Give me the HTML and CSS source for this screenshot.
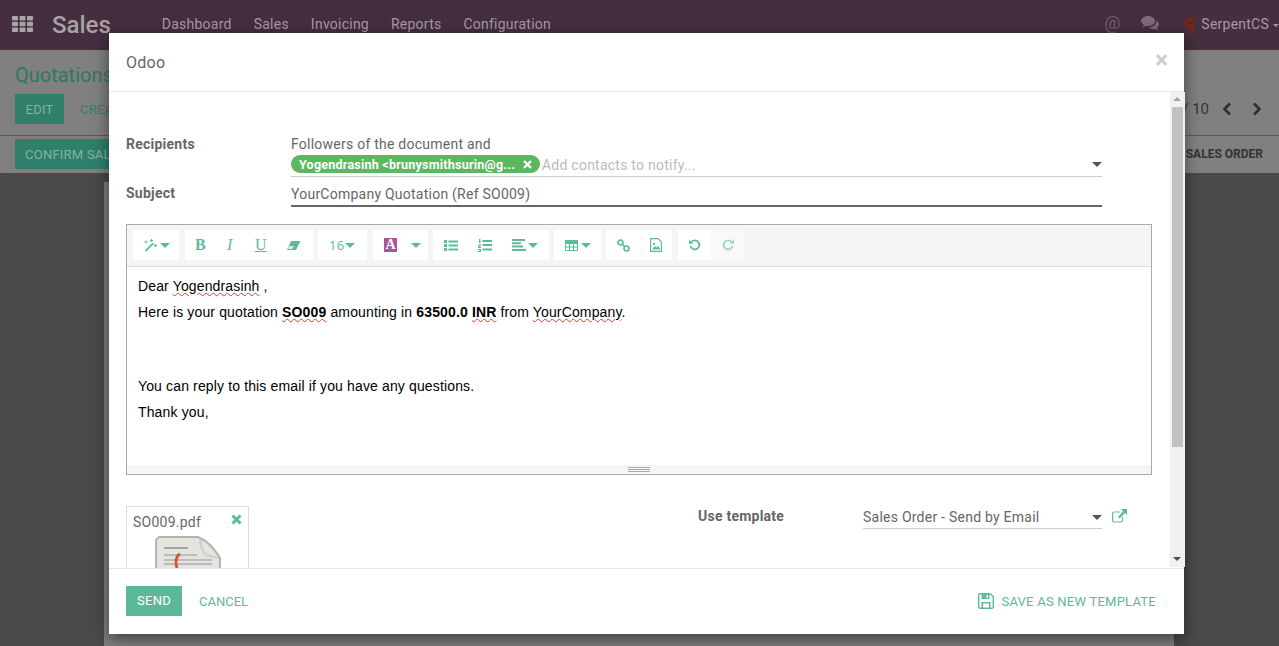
FILE: index.html
```html
<!DOCTYPE html>
<html lang="en">
<head>
<meta charset="utf-8">
<title>Odoo</title>
<link rel="stylesheet" href="styles.css">
</head>
<body>
<div class="app">
  <header class="nav">
    <svg class="apps" width="21" height="16" viewBox="0 0 21 16"><g fill="#a9a3a8"><rect x="0" y="0" width="6" height="4.4" rx=".8"/><rect x="7.5" y="0" width="6" height="4.4" rx=".8"/><rect x="15" y="0" width="6" height="4.4" rx=".8"/><rect x="0" y="5.8" width="6" height="4.4" rx=".8"/><rect x="7.5" y="5.8" width="6" height="4.4" rx=".8"/><rect x="15" y="5.8" width="6" height="4.4" rx=".8"/><rect x="0" y="11.6" width="6" height="4.4" rx=".8"/><rect x="7.5" y="11.6" width="6" height="4.4" rx=".8"/><rect x="15" y="11.6" width="6" height="4.4" rx=".8"/></g></svg>
    <span class="brand">Sales</span>
    <nav class="menu"><span>Dashboard</span><span>Sales</span><span>Invoicing</span><span>Reports</span><span>Configuration</span></nav>
    <div class="nav-right">
      <span class="at">@</span>
      <svg class="chat" width="18" height="15" viewBox="0 0 18 15"><path fill="#7d6b78" d="M7 0c3.900 0 7 2.200 7 5s-3.100 5-7 5c-.7 0-1.300-.1-1.900-.2C4 10.700 2.800 11 1.500 11c.7-.8 1.200-1.600 1.300-2.400C1.100 7.700 0 6.400 0 5c0-2.800 3.100-5 7-5z"/><path fill="#7d6b78" d="M15 4.500c1.800.8 3 2.200 3 3.800 0 1.300-.8 2.500-2 3.300.1.800.6 1.600 1.300 2.400-1.300 0-2.500-.4-3.500-1.200-.6.100-1.200.2-1.800.2-1.800 0-3.400-.5-4.500-1.400 4.300 0 7.800-2.500 7.800-6 0-.3 0-.6-.3-1.100z"/></svg>
      <svg class="logo" width="13" height="18" viewBox="0 0 13 18"><path fill="none" stroke="#7c2416" stroke-width="3.400" d="M11 1.500 3.500 5.200C1.800 6.200 2 7.800 3.500 8.500L8.500 10.500C10.200 11.200 10.200 12.500 9.200 13.700L6.500 17.500"/></svg>
      <span class="user">SerpentCS</span>
      <i class="user-caret"></i>
    </div>
  </header>
  <section class="panel">
    <h1 class="crumb">Quotations</h1>
    <div class="panel-row">
      <button class="pbtn">EDIT</button>
      <span class="plink">CREATE</span>
      <span class="pager">1 / 10</span>
      <svg class="chev" width="10" height="14" viewBox="0 0 10 14"><path fill="none" stroke="#2e2e2e" stroke-width="2.600" d="M8 1.500 2.500 7 8 12.500"/></svg>
      <svg class="chev" width="10" height="14" viewBox="0 0 10 14"><path fill="none" stroke="#2e2e2e" stroke-width="2.600" d="M2 1.500 7.500 7 2 12.500"/></svg>
    </div>
  </section>
  <section class="status">
    <button class="pbtn wide">CONFIRM SALE</button>
    <span class="status-right">SALES ORDER</span>
  </section>
  <main class="content"><div class="sheet"></div></main>
</div>

<div class="modal">
  <div class="m-head">
    <span class="m-title">Odoo</span>
    <span class="m-close">×</span>
  </div>
  <div class="m-mid">
    <div class="m-body">
      <div class="form-row">
        <label class="lbl">Recipients</label>
        <div class="field">
          <div class="followers">Followers of the document and</div>
          <div class="tagline">
            <span class="tag"><span>Yogendrasinh &lt;brunysmithsurin@g...</span>
              <svg width="9" height="9" viewBox="0 0 9 9"><path stroke="#fff" stroke-width="2.400" d="M1 1l7 7M8 1 1 8"/></svg>
            </span>
            <span class="ph">Add contacts to notify...</span>
            <i class="caret"></i>
          </div>
        </div>
      </div>
      <div class="form-row">
        <label class="lbl lbl-sub">Subject</label>
        <div class="field subject">YourCompany Quotation (Ref SO009)</div>
      </div>

      <div class="editor">
        <div class="toolbar">
          <div class="grp g-style">
            <svg width="15" height="13" viewBox="0 0 15 13"><path fill="#5cbb9c" d="M9.800 3.500 11 4.700 3 12.800 1.600 11.500z"/><path fill="#5cbb9c" d="M2.500 1.500h1v1h1v1h-1v1h-1v-1h-1v-1h1zM8 0h1v1h1v1H9v1H8V2H7V1h1zM12 5h1v1h1v1h-1v1h-1V7h-1V6h1z"/></svg><i class="tcaret"></i>
          </div>
          <div class="grp g-font">
            <span class="fmt b">B</span><span class="fmt i">I</span><span class="fmt u">U</span>
            <svg width="15" height="11" viewBox="0 0 15 11"><path fill="#5cbb9c" d="M5 1h9.500L10 10H1z"/><path fill="#fff" d="M3 6h5l-1.800 3H2.200z" opacity=".75"/></svg>
          </div>
          <div class="grp g-size"><span>16</span><i class="tcaret"></i></div>
          <div class="grp g-color">
            <span class="swatch">A</span><i class="tcaret"></i>
          </div>
          <div class="grp g-para">
            <svg width="14" height="11" viewBox="0 0 14 11"><path fill="#5cbb9c" d="M0 0h3v3H0zM0 4h3v3H0zM0 8h3v3H0zM4.500.5H14v2H4.500zM4.500 4.500H14v2H4.500zM4.500 8.500H14v2H4.500z"/></svg>
            <svg width="14" height="13" viewBox="0 0 14 13"><path fill="#5cbb9c" d="M1 0h1.500v4H1zM0 5.500h3v1L1.500 8H3v1H0V8l1.500-1.500H0zM0 10h3v3H0v-1h2v-.4H.8v-.7H2V11H0zM4.500 1H14v2H4.500zM4.500 5H14v2H4.500zM4.500 9.500H14v2H4.500z"/></svg>
            <span class="align"><svg width="14" height="12" viewBox="0 0 14 12"><path fill="#5cbb9c" d="M0 0h13v2H0zM0 3.300h9v2H0zM0 6.600h11v2H0zM0 10h14v2H0z"/></svg><i class="tcaret"></i></span>
          </div>
          <div class="grp g-table">
            <svg width="13" height="11" viewBox="0 0 13 11"><path fill="none" stroke="#5cbb9c" d="M.5.500h12v10H.5zM.5 3.500h12M.5 7h12M4.500.500v10M8.500.500v10"/><path fill="#5cbb9c" d="M0 0h13v3H0z"/></svg><i class="tcaret"></i>
          </div>
          <div class="grp g-ins">
            <svg width="13" height="13" viewBox="0 0 13 13"><g fill="none" stroke="#5cbb9c" stroke-width="1.700"><circle cx="3.500" cy="3.500" r="2.500"/><circle cx="9.500" cy="9.500" r="2.500"/><path d="M5 5l3 3"/></g></svg>
            <svg width="12" height="14" viewBox="0 0 12 14"><path fill="none" stroke="#5cbb9c" stroke-width="1.200" d="M.6.600h7.500l3.300 3.300v9.500H.6z"/><path fill="#5cbb9c" d="M2 11.500 5 8l1.500 1.500L8 8l2 2.500v1zM3 5h2v2H3z"/></svg>
          </div>
          <div class="grp g-hist">
            <span class="h-btn"><svg width="12" height="12" viewBox="0 0 12 12"><path fill="none" stroke="#5cbb9c" stroke-width="1.800" d="M2.400 3A4.500 4.500 0 1 1 1.500 7"/><path fill="#5cbb9c" d="M0 .5v4.300h4.300z"/></svg></span>
            <span class="h-btn off"><svg width="12" height="12" viewBox="0 0 12 12"><path fill="none" stroke="#9ad6c2" stroke-width="1.800" d="M9.600 3A4.500 4.500 0 1 0 10.500 7"/><path fill="#9ad6c2" d="M12 .5v4.300H7.700z"/></svg></span>
          </div>
        </div>
        <div class="doc">
          <p>Dear <span class="sp">Yogendrasinh</span> ,</p>
          <p>Here is your quotation <b class="sp">SO009</b> amounting in <b>63500.0</b> <b class="sp">INR</b> from <span class="sp">YourCompany</span>.</p>
          <p class="blank">&nbsp;</p>
          <p>You can reply to this email if you have any questions.</p>
          <p>Thank you,</p>
        </div>
        <div class="resizer"><i></i></div>
      </div>

      <div class="lower">
        <div class="attach-col">
          <div class="attach">
            <div class="attach-top"><span>SO009.pdf</span>
              <svg width="11" height="11" viewBox="0 0 11 11"><path stroke="#5cbb9c" stroke-width="3" d="M1.500 1.500l8 8M9.500 1.500l-8 8"/></svg>
            </div>
            <svg class="pdf" width="68" height="70" viewBox="0 0 68 70">
              <path fill="#e4e5e0" stroke="#b5b5b0" stroke-width="2" d="M5 1h39c8 3 16 11 22 21v46H2V4z"/>
              <path fill="#f6f6f3" stroke="#c4c4be" d="M46 2c-1 10 2 17 19 20-8-2-13-1-15-4z"/>
              <path stroke="#a3a3a0" stroke-width="2" d="M10 12h24"/>
              <path stroke="#bcbcb9" stroke-width="2" d="M10 19h33M10 24h48M10 28h48"/>
              <path fill="none" stroke="#e24d3a" stroke-width="2.800" d="M26 18c-4 2-5 8-3 14"/>
            </svg>
          </div>
        </div>
        <label class="lbl lbl-tpl">Use template</label>
        <div class="select"><span>Sales Order - Send by Email</span><i class="caret"></i></div>
        <svg class="ext" width="15" height="14" viewBox="0 0 15 14"><path fill="none" stroke="#5cbb9c" stroke-width="1.200" d="M10.500 8v3.500a1.500 1.500 0 0 1-1.500 1.500H2.100A1.500 1.500 0 0 1 .6 11.500V4.500A1.500 1.500 0 0 1 2.100 3H8"/><path fill="#5cbb9c" d="M9 0h6v6l-2-2-5.500 5.500-1.500-1.500L11 2.500z"/></svg>
      </div>
    </div>
    <div class="scrollbar">
      <i class="arrow up"></i>
      <div class="track"><div class="thumb"></div></div>
      <i class="arrow down"></i>
    </div>
  </div>
  <div class="m-foot">
    <button class="send">SEND</button>
    <span class="cancel">CANCEL</span>
    <span class="save">
      <svg width="16" height="16" viewBox="0 0 16 16"><path fill="none" stroke="#5cbb9c" stroke-width="1.400" d="M1.500.700h10.800l3 3v10.100a1.500 1.500 0 0 1-1.500 1.500H2.200a1.500 1.500 0 0 1-1.500-1.500V1.500z"/><path fill="#5cbb9c" d="M3.500 1h8v5h-8zM3.500 9h9v6h-1.500v-4.500H5V15H3.500z"/><path fill="#fff" d="M8.500 2h1.500v3H8.500z"/></svg>
      <span>SAVE AS NEW TEMPLATE</span>
    </span>
  </div>
</div>
</body>
</html>
```
FILE: styles.css
```css
* { box-sizing: border-box; }
html, body { margin: 0; height: 100%; overflow: hidden; }
body { font-family: Roboto, "Liberation Sans", sans-serif; font-size: 14px; letter-spacing: .24px; color: #666; background: #4a4a4a; }
button { font: inherit; letter-spacing: inherit; border: 0; }
i { display: block; }

.app { height: 646px; display: flex; flex-direction: column; }

.nav { height: 50px; background: #452e3f; display: flex; align-items: center; color: #a39ba1; flex: none; }
.apps { margin: 0 0 2px 12px; }
.brand { margin-left: 19px; font-size: 24px; font-weight: 500; letter-spacing: 0; color: #a8a2a7; line-height: 50px; }
.menu { display: flex; gap: 22px; margin-left: 51px; padding-bottom: 2px; }
.nav-right { margin-left: auto; display: flex; align-items: center; }
.at { font-size: 18px; letter-spacing: 0; color: #6f5c6a; padding-bottom: 6px; }
.chat { margin-left: 21px; margin-bottom: 4px; }
.logo { margin-left: 24px; margin-bottom: 1px; }
.user { margin-left: 5px; padding-bottom: 2px; }
.user-caret { margin-left: 4px; border-left: 3px solid transparent; border-right: 3px solid transparent; border-top: 3px solid #a39ba1; }

.panel { height: 86px; background: #808080; border-bottom: 1px solid #5c5c5c; padding: 12px 15px 0; flex: none; }
.crumb { margin: 0; font-size: 20px; font-weight: 400; letter-spacing: 0; color: #2e7864; line-height: 26px; }
.panel-row { display: flex; align-items: center; margin-top: 6px; height: 30px; }
.pbtn { height: 30px; width: 49px; padding: 0; background: #2f7f6b; color: #84b2a5; font-size: 13px; }
.pbtn.wide { width: 130px; text-align: left; padding-left: 10px; }
.plink { margin-left: 16px; color: #2f7f6b; font-size: 13px; }
.pager { margin-left: auto; margin-right: 13px; color: #333; font-size: 15px; letter-spacing: 0; }
.chev { margin-right: 20px; }
.chev:last-child { margin-right: 2px; }

.status { height: 37px; background: #808080; display: flex; align-items: center; padding: 0 16px 1px 15px; flex: none; }
.status-right { margin-left: auto; font-size: 12px; font-weight: 700; letter-spacing: 0; color: #333; }

.content { flex: 1; background: #4a4a4a; padding: 9px 105px 0 104px; min-height: 0; }
.sheet { height: 100%; background: #7f7f7f; }

.modal { position: absolute; left: 109px; top: 33px; width: 1075px; height: 601px; background: #fff; box-shadow: 0 5px 15px rgba(0,0,0,.5); display: flex; flex-direction: column; }
.m-head { height: 59px; flex: none; border-bottom: 1px solid #e5e5e5; padding: 0 17px; display: flex; align-items: center; justify-content: space-between; }
.m-title { font-size: 16px; color: #666; }
.m-close { font-size: 24px; font-weight: 700; letter-spacing: 0; color: #ccc; line-height: 1; position: relative; top: -2px; right: -1px; }

.m-mid { flex: 1; min-height: 0; display: flex; }
.m-body { flex: 1; min-width: 0; overflow: hidden; padding: 42px 17px 0; }

.form-row { display: flex; }
.lbl { width: 165px; flex: none; font-weight: 700; color: #666; line-height: 20px; }
.field { width: 811px; }
.followers { line-height: 20px; }
.tagline { height: 23px; border-bottom: 1px solid #ccc; display: flex; align-items: center; padding-bottom: 2px; }
.tag { height: 18px; width: 249px; border-radius: 9px; background: #5cb85c; color: #fff; font-size: 12.500px; font-weight: 700; display: flex; align-items: center; justify-content: space-between; padding: 0 8px; flex: none; }
.ph { margin-left: 2px; color: #bbb; padding-top: 1px; }
.caret { border-left: 5px solid transparent; border-right: 5px solid transparent; border-top: 5px solid #555; margin-left: auto; }
.lbl-sub { line-height: 20px; padding-top: 6px; }
.subject { height: 30px; border-bottom: 2px solid #666; line-height: 20px; padding-top: 7px; }

.editor { margin-top: 17px; height: 251px; width: 1026px; border: 1px solid #aaa; display: flex; flex-direction: column; }
.toolbar { height: 42px; flex: none; background: #f5f5f5; border-bottom: 1px solid #ddd; padding: 5px 6px 0; display: flex; gap: 5px; }
.grp { height: 30px; background: #fff; display: flex; align-items: center; color: #5cbb9c; }
.tcaret { border-left: 5px solid transparent; border-right: 5px solid transparent; border-top: 5px solid #5cbb9c; }
.g-style { width: 46px; padding-left: 10px; gap: 2px; margin-right: 1px; }
.g-font { width: 128px; padding-left: 10px; }
.fmt { width: 30px; font-family: "Liberation Serif", serif; font-size: 16px; line-height: 1; }
.fmt.b { font-weight: 700; }
.fmt.i { font-style: italic; padding-left: 2px; }
.fmt.u { text-decoration: underline; width: 31px; }
.g-size { width: 49px; padding-left: 11px; gap: 1px; font-family: "Open Sans", sans-serif; font-size: 13px; margin-right: 1px; }
.g-color { width: 55px; padding-left: 11px; }
.swatch { width: 13px; height: 14px; background: #a8589a; color: #fff; font-family: "Liberation Serif", serif; font-weight: 700; font-size: 14px; line-height: 14px; text-align: center; letter-spacing: 0; }
.g-color .tcaret { margin-left: 14px; }
.g-para { width: 116px; padding-left: 11px; gap: 20px; }
.align { display: flex; align-items: center; gap: 2px; }
.g-table { width: 47px; padding-left: 11px; gap: 3px; }
.g-ins { width: 66px; padding-left: 11px; gap: 20px; margin-right: 1px; }
.g-hist { width: 66px; background: none; }
.h-btn { width: 33px; height: 30px; background: #fff; display: flex; align-items: center; justify-content: center; }
.h-btn.off { background: #f9f9f9; }

.doc { flex: 1; padding: 9px 11px 0; font-family: "Liberation Sans", Arial, sans-serif; font-size: 14px; letter-spacing: .14px; line-height: 20px; color: #000; }
.doc p { margin: 0 0 6px; }
.doc .blank { margin-bottom: 28px; }
.sp { text-decoration: underline wavy #e0392b 1px; text-underline-offset: 1px; }
.resizer { height: 9px; flex: none; background: #f5f5f5; display: flex; align-items: center; justify-content: center; }
.resizer i { width: 22px; height: 5px; border-top: 1px solid #aaa; border-bottom: 1px solid #aaa; }
.resizer i::after { content: ""; display: block; height: 1px; margin-top: 1px; background: #aaa; }

.lower { margin-top: 31px; display: flex; align-items: flex-start; }
.attach-col { width: 572px; flex: none; }
.attach { width: 123px; height: 90px; border: 1px solid #ddd; padding: 5px 6px 0; }
.attach-top { display: flex; justify-content: space-between; line-height: 20px; }
.attach-top svg { margin-top: 2px; }
.pdf { display: block; margin: 4px 0 0 21px; }
.lbl-tpl { line-height: 20px; }
.select { width: 239px; height: 23px; border-bottom: 1px solid #ccc; display: flex; align-items: center; }
.ext { margin: 3px 0 0 10px; }

.scrollbar { width: 15px; margin: 0 -1px 1px 0; background: #f1f1f1; display: flex; flex-direction: column; flex: none; }
.arrow { height: 15px; position: relative; flex: none; }
.arrow::after { content: ""; position: absolute; left: 3px; border-left: 4px solid transparent; border-right: 4px solid transparent; }
.arrow.up::after { top: 5px; border-bottom: 4px solid #a3a3a3; }
.arrow.down::after { top: 5px; border-top: 4px solid #505050; }
.track { flex: 1; padding: 0 2px; }
.thumb { height: 340px; background: #c1c1c1; }

.m-foot { height: 66px; flex: none; border-top: 1px solid #e5e5e5; padding: 0 28px 2px 17px; display: flex; align-items: center; }
.send { width: 56px; height: 30px; background: #5bb99a; color: #fff; font-size: 13px; padding: 0; }
.cancel { margin-left: 17px; color: #5bb99a; font-size: 13px; letter-spacing: 0; padding-top: 2px; }
.save { margin-left: auto; display: flex; align-items: center; gap: 7px; color: #5bb99a; font-size: 13px; }
.save span { padding-top: 2px; }
```
